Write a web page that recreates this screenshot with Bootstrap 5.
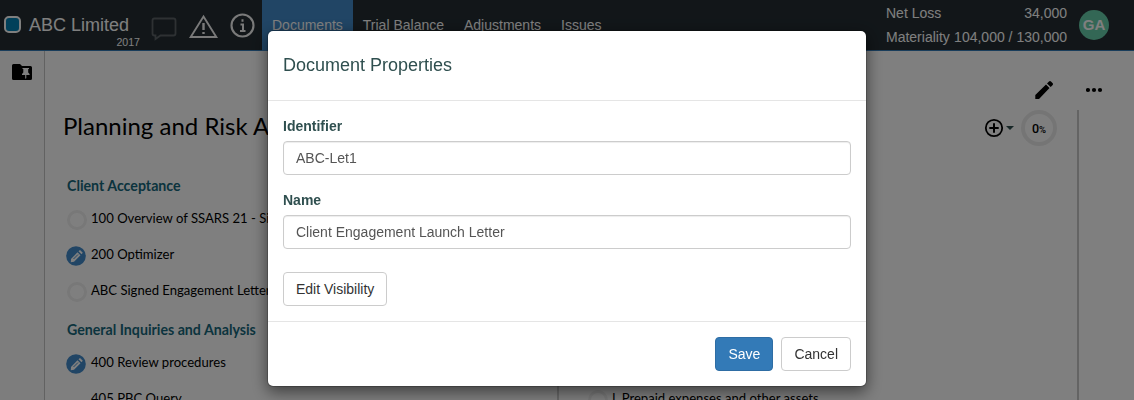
<!DOCTYPE html>
<html lang="en">
<head>
<meta charset="utf-8">
<meta name="viewport" content="width=device-width, initial-scale=1">
<title>ABC Limited - Documents</title>
<link href="https://cdn.jsdelivr.net/npm/bootstrap@5.3.0/dist/css/bootstrap.min.css" rel="stylesheet">
<style>
  body { font-family: "Liberation Sans", Arial, sans-serif; font-size: 14px; line-height: 20px; color: #000; height: 400px; overflow: hidden; }
  .topbar { height: 51px; background: #242d33; border-bottom: 1px solid #337ab7; color: #fff; }
  .client-mark { width: 17px; height: 17px; border: 2px solid #fff; border-radius: 5px; background: #0080b4; margin: 16px 0 0 4px; }
  .client-title { width: 119px; padding: 15px 0 0 8px; }
  .client-title .title-line { font-size: 18px; line-height: 20px; }
  .client-title .year-line { font-size: 10.6px; line-height: 12px; text-align: right; margin-top: 1px; }
  .topbar svg { display: block; }
  .header-icons { width: 122px; }
  .topbar .nav-link { color: #fff; font-size: 14px; line-height: 20px; padding: 15px 10px; height: 51px; }
  .topbar .nav-link.active { background: #428bca; }
  .totals { width: 181px; line-height: 24px; padding-top: 1px; }
  .avatar { width: 30px; height: 30px; background: #67ceaa; font-weight: 700; font-size: 15px; margin: 10px 25px 0 12px; }
  .side-rail { width: 45px; border-right: 1px solid #c4c4c4; background: #fbfbfb; padding: 12px 0 0 12px; }
  .workspace { height: 349px; overflow: hidden; font-family: Lato, sans-serif; }
  .tools-row { height: 59px; padding: 29px 31px 0 0; }
  .tools-row svg + svg { margin-left: 32px; }
  .board { width: 1034px; border-right: 2px solid #c8c8c8; }
  .phase-title { font-size: 24px; line-height: 32px; padding-left: 18px; height: 58px; font-weight: 400; margin: 0; }
  .progress-tools { height: 36px; margin-right: 20px; }
  .doc-col { width: 512px; padding-left: 22px; }
  .doc-col + .doc-col { border-left: 2px solid #d0d0d0; padding-left: 29px; width: 520px; }
  .lower-rows { padding-top: 216px; }
  .group-title { font-size: 14.2px; font-weight: 700; line-height: 36px; height: 36px; color: #17687c; margin: 0; }
  .doc-row { height: 36px; font-size: 13.1px; white-space: nowrap; padding-top: 4px; }
  .state { width: 20px; height: 20px; margin: 2px 4px 0 0; flex: none; overflow: visible; }
  .state-open { border: 3px solid #f0f0f0; border-radius: 50%; }
  .ring { width: 36px; height: 36px; border: 4px solid #ebebeb; font: 500 12.5px/30px Roboto, sans-serif; margin-left: 7px; }
  .ring small { font-size: 9.5px; }
  .caret { border: 4px solid transparent; border-top-color: #2f4f4f; border-bottom: 0; margin-left: 2px; }
  .modal-dialog { width: 600px; max-width: 600px; margin: 30px 0 0 267px; }
  .modal-content { border: 1px solid rgba(0,0,0,.2); border-radius: 6px; box-shadow: 0 5px 15px rgba(0,0,0,.5); color: #2f4f4f; }
  .modal-header { height: 70px; padding: 15px; border-color: #e5e5e5; align-items: flex-start; }
  .modal-title { font-size: 18px; line-height: 25px; font-weight: 400; padding-top: 7px; }
  .modal-body { padding: 15px; height: 220px; flex: none; }
  .modal-body .form-label { display: block; font-weight: 700; margin: 0 0 5px; }
  .modal-body .form-control { height: 34px; padding: 6px 12px; font-size: 14px; line-height: 20px; color: #555; border: 1px solid #ccc; border-radius: 4px; box-shadow: inset 0 1px 1px rgba(0,0,0,.075); margin-bottom: 15px; }
  .modal .btn { font-size: 14px; line-height: 20px; padding: 6px 12px; border-radius: 4px; }
  .modal .btn-light { background: #fff; border-color: #ccc; color: #333; }
  .modal .btn-primary { background: #337ab7; border-color: #2e6da4; }
  .modal-footer { height: 65px; padding: 15px; gap: 8px; border-color: #e5e5e5; align-items: flex-start; }
  .modal-footer > * { margin: 0; }
</style>
</head>
<body>
<header class="topbar d-flex">
  <div class="client-mark flex-shrink-0"></div>
  <div class="client-title flex-shrink-0">
    <div class="title-line">ABC Limited</div>
    <div class="year-line">2017</div>
  </div>
  <div class="header-icons flex-shrink-0">
    <svg width="122" height="50" viewBox="140 0 122 50" fill="none">
      <path d="M154.500 18.500H173.500Q175.500 18.500 175.500 20.500V33.500Q175.500 35.500 173.500 35.500H160.500L155.500 39V35.500H154.500Q152.500 35.500 152.500 33.500V20.500Q152.500 18.500 154.500 18.500Z" stroke="#5c6267" stroke-width="1.8"/>
      <path d="M203.500 16.500L216.300 37H190.700Z" stroke="#f4f4f4" stroke-width="1.9"/>
      <path d="M203.500 23V30M203.500 32V34" stroke="#f4f4f4" stroke-width="2.400"/>
      <circle cx="242.500" cy="25.500" r="11" stroke="#f4f4f4" stroke-width="2.100"/>
      <path d="M242.500 19.300V21.800M240.500 24.500H243V31M240 31H245.500" stroke="#f4f4f4" stroke-width="2"/>
    </svg>
  </div>
  <ul class="nav flex-nowrap">
    <li class="nav-item"><a class="nav-link active" href="#">Documents</a></li>
    <li class="nav-item"><a class="nav-link" href="#">Trial Balance</a></li>
    <li class="nav-item"><a class="nav-link" href="#">Adjustments</a></li>
    <li class="nav-item"><a class="nav-link" href="#">Issues</a></li>
  </ul>
  <div class="totals ms-auto">
    <div class="d-flex justify-content-between"><span>Net Loss</span><span>34,000</span></div>
    <div class="d-flex justify-content-between"><span>Materiality</span><span>104,000 / 130,000</span></div>
  </div>
  <div class="avatar rounded-circle d-flex align-items-center justify-content-center">GA</div>
</header>
<div class="d-flex workspace">
  <aside class="side-rail flex-shrink-0">
    <svg width="20" height="18" viewBox="0 0 20 18" class="d-block"><path d="M1.500 1H8L10 3H18.500Q20 3 20 4.500V15.500Q20 17 18.500 17H1.500Q0 17 0 15.500V2.500Q0 1 1.500 1Z" fill="#000"/><path d="M10.500 5H17V6H16.200V9.500L17.600 11V12H14.300V15L13.800 16L13.200 15V12H10V11L11.300 9.500V6H10.500Z" fill="#fff"/></svg>
  </aside>
  <main class="flex-grow-1">
    <div class="tools-row d-flex justify-content-end">
      <svg width="20" height="20" viewBox="0 0 20 20"><path d="M1.300 15L12 4.500L15.500 8L5 19H1.300ZM13 3.500L15 1.500Q16 .7 17 1.500L18.700 3.200Q19.500 4 18.700 5L16.700 7Z" fill="#000"/></svg>
      <svg width="17" height="20" viewBox="0 0 17 20"><circle cx="2" cy="10" r="2.100"/><circle cx="8" cy="10" r="2.100"/><circle cx="14" cy="10" r="2.100"/></svg>
    </div>
    <div class="board">
      <div class="d-flex justify-content-between">
        <h1 class="phase-title">Planning and Risk Assessment</h1>
        <div class="progress-tools d-flex align-items-center">
          <svg width="20" height="20" viewBox="0 0 20 20" fill="none" stroke="#000"><circle cx="10" cy="10" r="8.200" stroke-width="1.800"/><path d="M10 5.300V14.700M5.300 10H14.700" stroke-width="2"/></svg>
          <span class="caret"></span>
          <div class="ring rounded-circle text-center">0<small>%</small></div>
        </div>
      </div>
      <div class="d-flex">
        <section class="doc-col">
          <h2 class="group-title">Client Acceptance</h2>
          <div class="doc-row d-flex"><span class="state state-open"></span><span>100 Overview of SSARS 21 - Significant Changes</span></div>
          <div class="doc-row d-flex"><svg class="state" viewBox="0 0 20 20"><circle cx="9" cy="10" r="9.800" fill="#428bca"/><path d="M4 13L10.500 6.300L13.500 9.300L7 15.800L3.800 16.200ZM11.500 5.300L13 4L15.800 6.700L14.500 8.300Z" fill="#fff"/><path d="M6.500 13L11 8.500" stroke="#428bca" stroke-width="1"/></svg><span>200 Optimizer</span></div>
          <div class="doc-row d-flex"><span class="state state-open"></span><span>ABC Signed Engagement Letter</span></div>
          <h2 class="group-title">General Inquiries and Analysis</h2>
          <div class="doc-row d-flex"><svg class="state" viewBox="0 0 20 20"><circle cx="9" cy="10" r="9.800" fill="#428bca"/><path d="M4 13L10.500 6.300L13.500 9.300L7 15.800L3.800 16.200ZM11.500 5.300L13 4L15.800 6.700L14.500 8.300Z" fill="#fff"/><path d="M6.500 13L11 8.500" stroke="#428bca" stroke-width="1"/></svg><span>400 Review procedures</span></div>
          <div class="doc-row d-flex"><span class="state"></span><span>405 PBC Query</span></div>
        </section>
        <section class="doc-col lower-rows">
          <div class="doc-row d-flex"><span class="state state-open"></span><span>L Prepaid expenses and other assets</span></div>
        </section>
      </div>
    </div>
  </main>
</div>
<div class="modal-backdrop show"></div>
<div class="modal d-block overflow-hidden" role="dialog" aria-label="Document Properties">
  <div class="modal-dialog">
    <div class="modal-content">
      <div class="modal-header"><h4 class="modal-title">Document Properties</h4></div>
      <div class="modal-body">
        <label class="form-label" for="identifier">Identifier</label>
        <input class="form-control" id="identifier" type="text" value="ABC-Let1">
        <label class="form-label" for="docname">Name</label>
        <input class="form-control" id="docname" type="text" value="Client Engagement Launch Letter">
        <button class="btn btn-light mt-2" type="button">Edit Visibility</button>
      </div>
      <div class="modal-footer">
        <button class="btn btn-primary" type="button">Save</button>
        <button class="btn btn-light" type="button">Cancel</button>
      </div>
    </div>
  </div>
</div>
<script src="https://cdn.jsdelivr.net/npm/bootstrap@5.3.0/dist/js/bootstrap.bundle.min.js"></script>
</body>
</html>
